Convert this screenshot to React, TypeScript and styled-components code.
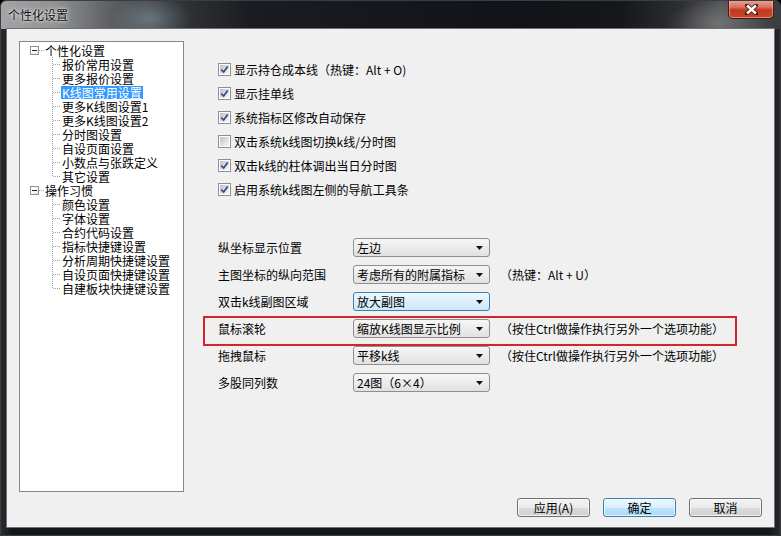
import React from 'react';
import styled, { createGlobalStyle } from 'styled-components';

const GlobalStyle = createGlobalStyle`
  html, body { margin: 0; padding: 0; background: #000; }
  body {
    font-family: "Noto Sans CJK SC", "Liberation Sans", sans-serif;
    font-size: 12px;
    color: #000;
  }
`;

const Window = styled.div`
  width: 781px;
  height: 536px;
  box-sizing: border-box;
  display: flex;
  flex-direction: column;
  background: linear-gradient(90deg, #2a2b2e 0px, #151619 12px, #151619 768px, #2c2d30 781px);
  border: 1px solid #3c3d40;
  border-radius: 6px 6px 0 0;
  overflow: hidden;
`;

const TitleBar = styled.div`
  height: 28px;
  display: flex;
  align-items: flex-start;
  background:
    radial-gradient(ellipse 40px 26px at 150px 18px, rgba(150, 175, 190, 0.45), transparent),
    radial-gradient(ellipse 50px 22px at 715px 22px, rgba(140, 140, 140, 0.5), transparent),
    linear-gradient(90deg, #a2a4a6 0px, #8f9193 55px, #5c5e61 110px, #34363a 170px, #1b1c21 250px,
      #121318 520px, #16171b 620px, #2e2f33 680px, #56575a 720px, #3a3b3e 781px);
`;

const Title = styled.div`
  flex: 1;
  padding: 6px 0 0 7px;
  font-size: 12px;
  line-height: 16px;
  color: #111;
  text-shadow: 0 0 5px rgba(255, 255, 255, 0.9), 0 0 2px rgba(255, 255, 255, 0.8);
`;

const CloseButton = styled.div`
  width: 46px;
  height: 19px;
  margin: -1px 6px 0 0;
  box-sizing: border-box;
  display: flex;
  align-items: center;
  justify-content: center;
  border: 1px solid #4a1710;
  border-top: none;
  border-radius: 0 0 5px 5px;
  background: linear-gradient(#e8a89c 0%, #d7705c 40%, #c2381f 55%, #c9462a 100%);
  box-shadow: inset 0 0 0 1px rgba(255, 220, 210, 0.45);
`;

const Client = styled.div`
  flex: 1;
  margin: 0 6px 8px 6px;
  background: #f0f0f0;
  box-shadow: 0 0 0 1px #707275;
  display: grid;
  grid-template-columns: 165px 1fr;
  grid-template-rows: 451px auto;
  column-gap: 19px;
  row-gap: 6px;
  padding: 12px 12px 0 12px;
`;

const TreeBox = styled.div`
  box-sizing: border-box;
  background: #fff;
  border: 1px solid #828790;
  padding-top: 1px;
`;

const TreeRow = styled.div<{ $indent: number }>`
  display: flex;
  align-items: center;
  height: 14px;
  padding-left: ${p => p.$indent}px;
  white-space: nowrap;
`;

const Expander = styled.span`
  width: 9px;
  height: 9px;
  box-sizing: border-box;
  border: 1px solid #919191;
  background: linear-gradient(135deg, #fff 40%, #e4e4e4);
  display: flex;
  align-items: center;
  justify-content: center;
  &::before {
    content: '';
    width: 5px;
    height: 1px;
    background: #222;
  }
`;

const TreeLabel = styled.span<{ $selected?: boolean }>`
  display: inline-block;
  height: 13px;
  padding: 0 1px;
  line-height: 13px;
  font-size: 12px;
  background: ${p => (p.$selected ? '#3399ff' : 'transparent')};
  color: ${p => (p.$selected ? '#fff' : '#000')};
`;

const Content = styled.div`
  padding-top: 16px;
  display: flex;
  flex-direction: column;
`;

const CheckRow = styled.label`
  height: 24px;
  display: flex;
  align-items: center;
  gap: 3px;
  padding-left: 15px;
  white-space: nowrap;
`;

const CheckBox = styled.span`
  width: 13px;
  height: 13px;
  box-sizing: border-box;
  border: 1px solid #8e8f8f;
  padding: 1px;
  background: #fff;
  display: flex;
`;

const CheckInner = styled.span`
  flex: 1;
  background: linear-gradient(135deg, #b9bdc2 0%, #dcdee0 50%, #f6f6f6 100%);
  display: flex;
  align-items: center;
  justify-content: center;
`;

const Form = styled.div`
  margin-top: 33px;
  display: flex;
  flex-direction: column;
  width: 534px;
`;

const FormRow = styled.div<{ $marked?: boolean }>`
  position: relative;
  height: 27px;
  display: grid;
  grid-template-columns: 135px 137px auto;
  align-items: center;
  padding-left: 15px;
  white-space: nowrap;
  ${p =>
    p.$marked &&
    `&::after {
      content: '';
      position: absolute;
      left: 0; right: 0; top: 1px; bottom: -4px;
      border: 2px solid #d0262c;
      pointer-events: none;
    }`}
`;

const Select = styled.div<{ $focused?: boolean }>`
  height: 19px;
  box-sizing: border-box;
  display: flex;
  align-items: center;
  justify-content: space-between;
  padding: 0 6px 0 3px;
  border: 1px solid ${p => (p.$focused ? '#3c7fb1' : '#8e8f8f')};
  border-radius: 3px;
  background: ${p =>
    p.$focused
      ? 'linear-gradient(#edf7fd, #dceffb 50%, #cde8fa)'
      : 'linear-gradient(#f7f7f7, #ececec 50%, #e1e1e1)'};
  font-size: 12px;
  line-height: 15px;
`;

const Hint = styled.span`
  margin-left: 10px;
  font-size: 12px;
`;

const Footer = styled.div`
  grid-column: 1 / span 2;
  display: flex;
  justify-content: flex-end;
  gap: 13px;
`;

const Button = styled.button<{ $default?: boolean }>`
  width: 73px;
  height: 19px;
  padding: 0;
  box-sizing: border-box;
  font-family: "Noto Sans CJK SC", "Liberation Sans", sans-serif;
  font-size: 12px;
  line-height: 15px;
  color: #000;
  border-radius: 3px;
  border: 1px solid ${p => (p.$default ? '#3c7fb1' : '#707070')};
  background: ${p =>
    p.$default
      ? 'linear-gradient(#eaf6fd, #d9f0fc 50%, #bee6fd 51%, #a7d9f5)'
      : 'linear-gradient(#f2f2f2, #ebebeb 50%, #dddddd 51%, #cfcfcf)'};
  box-shadow: inset 0 0 0 1px rgba(255, 255, 255, 0.7);
`;

const tree = [
  {
    label: '个性化设置',
    children: [
      '报价常用设置',
      '更多报价设置',
      'K线图常用设置',
      '更多K线图设置1',
      '更多K线图设置2',
      '分时图设置',
      '自设页面设置',
      '小数点与张跌定义',
      '其它设置',
    ],
  },
  {
    label: '操作习惯',
    children: [
      '颜色设置',
      '字体设置',
      '合约代码设置',
      '指标快捷键设置',
      '分析周期快捷键设置',
      '自设页面快捷键设置',
      '自建板块快捷键设置',
    ],
  },
];

const checks = [
  { text: '显示持仓成本线（热键：Alt + O)', on: true },
  { text: '显示挂单线', on: true },
  { text: '系统指标区修改自动保存', on: true },
  { text: '双击系统k线图切换k线/分时图', on: false },
  { text: '双击k线的柱体调出当日分时图', on: true },
  { text: '启用系统k线图左侧的导航工具条', on: true },
];

const rows = [
  { label: '纵坐标显示位置', value: '左边' },
  { label: '主图坐标的纵向范围', value: '考虑所有的附属指标', hint: '（热键：Alt + U）' },
  { label: '双击k线副图区域', value: '放大副图', focused: true },
  { label: '鼠标滚轮', value: '缩放K线图显示比例', hint: '（按住Ctrl做操作执行另外一个选项功能）', marked: true },
  { label: '拖拽鼠标', value: '平移k线', hint: '（按住Ctrl做操作执行另外一个选项功能）' },
  { label: '多股同列数', value: '24图（6×4）' },
];

const Dots = ({ w, last, root }: { w: number; last?: boolean; root?: boolean }) => (
  <svg width={w} height={14} style={{ display: 'block', flex: 'none' }} shapeRendering="crispEdges">
    {!root && (
      <line x1={4.5} y1={0} x2={4.5} y2={last ? 7 : 14} stroke="#a0a0a0" strokeDasharray="1 1" />
    )}
    <line x1={root ? 0 : 5} y1={7.5} x2={w} y2={7.5} stroke="#a0a0a0" strokeDasharray="1 1" />
  </svg>
);

const Arrow = () => (
  <svg width="7" height="4" viewBox="0 0 7 4" style={{ display: 'block' }}>
    <polygon points="0,0 7,0 3.5,4" fill="#111" />
  </svg>
);

const Check = () => (
  <svg width="9" height="9" viewBox="0 0 9 9" style={{ display: 'block' }}>
    <path d="M1.3 4.6 L3.6 7 L7.8 1.6" fill="none" stroke="#2e4a86" strokeWidth="1.7" />
  </svg>
);

export default function App() {
  return (
    <>
      <GlobalStyle />
      <Window>
        <TitleBar>
          <Title>个性化设置</Title>
          <CloseButton>
            <svg width="13" height="11" viewBox="0 0 13 11">
              <path
                d="M2 1.5 L11 9.5 M11 1.5 L2 9.5"
                stroke="#3a1008"
                strokeWidth="4"
                strokeLinecap="round"
              />
              <path d="M2 1.5 L11 9.5 M11 1.5 L2 9.5" stroke="#fff" strokeWidth="2.4" />
            </svg>
          </CloseButton>
        </TitleBar>
        <Client>
          <TreeBox>
            {tree.map(group => (
              <React.Fragment key={group.label}>
                <TreeRow $indent={10}>
                  <Expander />
                  <Dots w={5} root />
                  <TreeLabel>{group.label}</TreeLabel>
                </TreeRow>
                {group.children.map((child, i) => (
                  <TreeRow $indent={28} key={child}>
                    <Dots w={13} last={i === group.children.length - 1} />
                    <TreeLabel $selected={child === 'K线图常用设置'}>{child}</TreeLabel>
                  </TreeRow>
                ))}
              </React.Fragment>
            ))}
          </TreeBox>
          <Content>
            {checks.map(c => (
              <CheckRow key={c.text}>
                <CheckBox>
                  <CheckInner>{c.on && <Check />}</CheckInner>
                </CheckBox>
                {c.text}
              </CheckRow>
            ))}
            <Form>
              {rows.map(r => (
                <FormRow key={r.label} $marked={r.marked}>
                  <span>{r.label}</span>
                  <Select $focused={r.focused}>
                    <span>{r.value}</span>
                    <Arrow />
                  </Select>
                  {r.hint ? <Hint>{r.hint}</Hint> : <span />}
                </FormRow>
              ))}
            </Form>
          </Content>
          <Footer>
            <Button>应用(A)</Button>
            <Button $default>确定</Button>
            <Button>取消</Button>
          </Footer>
        </Client>
      </Window>
    </>
  );
}
